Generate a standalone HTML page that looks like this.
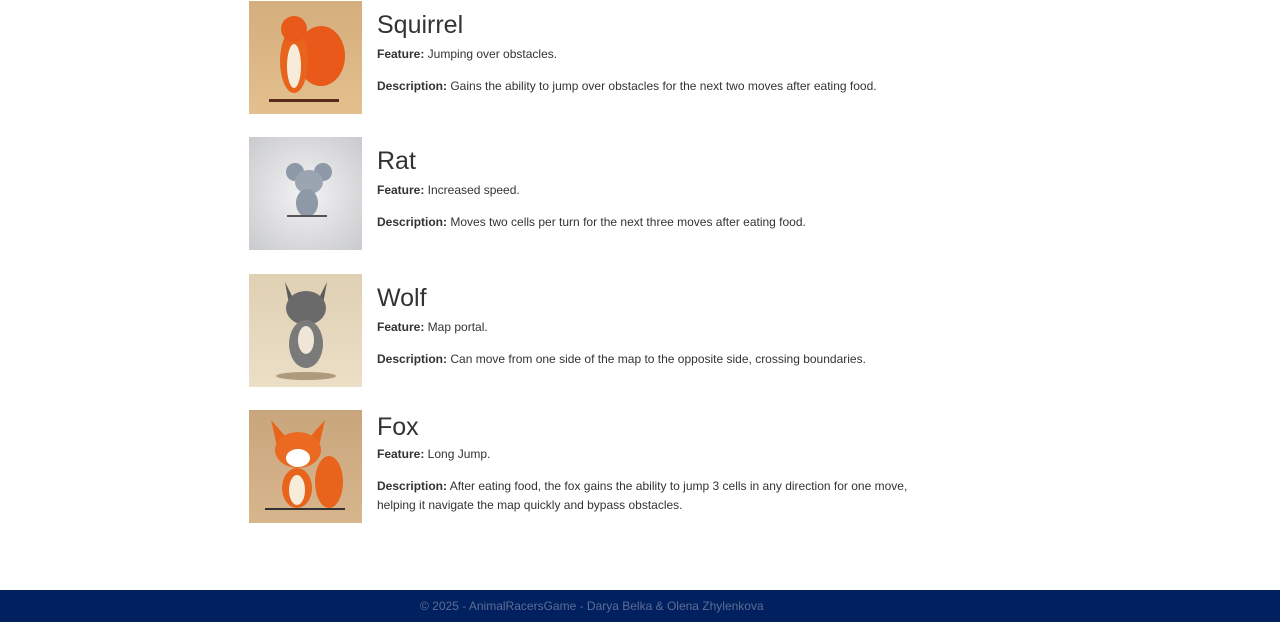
<!DOCTYPE html>
<html><head><meta charset="utf-8"><style>
body{margin:0;width:1280px;height:622px;position:relative;background:#fff;font-family:"Liberation Sans",sans-serif;color:#212529;overflow:hidden}
.row{position:absolute;left:249px;width:700px;height:114px}
.img{position:absolute;left:0;top:0;width:113px;height:113px;overflow:hidden}
.t{position:absolute;left:128px;top:10px;font-size:25px;color:#333;margin:0;font-weight:normal}
.f{position:absolute;left:128px;top:46px;font-size:12px;color:#333}
.d{position:absolute;left:128px;top:76px;font-size:12px;color:#333;line-height:19px;width:560px}
.fox .t{top:3px}.fox .f{top:37px}.fox .d{top:67px}
b{font-weight:bold}
footer{position:absolute;left:0;top:590px;width:1280px;height:32px;background:#002060;color:#5d6e94;font-size:12px;line-height:33px}
footer span{position:absolute;left:420px}
</style></head><body>
<div class="row" style="top:1px"><div class="img" style="background:linear-gradient(#d4ae7c,#e3c08e)">
<svg width="113" height="113"><ellipse cx="72" cy="55" rx="24" ry="30" fill="#e8591a"/><ellipse cx="45" cy="60" rx="14" ry="32" fill="#e8641c"/><ellipse cx="45" cy="65" rx="7" ry="22" fill="#f6ecd9"/><circle cx="45" cy="28" r="13" fill="#e8591a"/><rect x="20" y="98" width="70" height="3" fill="#5a2a1a"/></svg></div>
<h1 class="t">Squirrel</h1><div class="f"><b>Feature:</b> Jumping over obstacles.</div><div class="d"><b>Description:</b> Gains the ability to jump over obstacles for the next two moves after eating food.</div></div>

<div class="row" style="top:137px"><div class="img" style="background:radial-gradient(circle,#f3f3f4,#c9cacd)">
<svg width="113" height="113"><circle cx="46" cy="35" r="9" fill="#8d99a6"/><circle cx="74" cy="35" r="9" fill="#8d99a6"/><ellipse cx="60" cy="45" rx="14" ry="12" fill="#9aa5b1"/><ellipse cx="58" cy="66" rx="11" ry="14" fill="#8d99a6"/><rect x="38" y="78" width="40" height="2" fill="#555"/></svg></div>
<h1 class="t">Rat</h1><div class="f"><b>Feature:</b> Increased speed.</div><div class="d"><b>Description:</b> Moves two cells per turn for the next three moves after eating food.</div></div>

<div class="row" style="top:274px"><div class="img" style="background:linear-gradient(#dfd0b3,#ecdfc7)">
<svg width="113" height="113"><polygon points="36,8 46,28 40,30" fill="#5c5c5c"/><polygon points="78,8 68,28 74,30" fill="#5c5c5c"/><ellipse cx="57" cy="34" rx="20" ry="17" fill="#6a6a6a"/><ellipse cx="57" cy="70" rx="17" ry="24" fill="#7a7a7a"/><ellipse cx="57" cy="66" rx="8" ry="14" fill="#efe6d8"/><ellipse cx="57" cy="102" rx="30" ry="4" fill="#b09a7c"/></svg></div>
<h1 class="t">Wolf</h1><div class="f"><b>Feature:</b> Map portal.</div><div class="d"><b>Description:</b> Can move from one side of the map to the opposite side, crossing boundaries.</div></div>

<div class="row fox" style="top:410px"><div class="img" style="background:linear-gradient(#c9a57c,#d8b68d)">
<svg width="113" height="113"><ellipse cx="80" cy="72" rx="14" ry="26" fill="#e8641c"/><polygon points="22,10 38,28 28,36" fill="#e8641c"/><polygon points="76,10 60,28 70,36" fill="#e8641c"/><ellipse cx="49" cy="40" rx="23" ry="18" fill="#ea6a22"/><ellipse cx="49" cy="48" rx="12" ry="9" fill="#fff"/><ellipse cx="48" cy="78" rx="15" ry="20" fill="#e8641c"/><ellipse cx="48" cy="80" rx="8" ry="15" fill="#f6ecd9"/><rect x="16" y="98" width="80" height="2" fill="#333"/></svg></div>
<h1 class="t">Fox</h1><div class="f"><b>Feature:</b> Long Jump.</div><div class="d"><b>Description:</b> After eating food, the fox gains the ability to jump 3 cells in any direction for one move, helping it navigate the map quickly and bypass obstacles.</div></div>

<footer><span>© 2025 - AnimalRacersGame - Darya Belka &amp; Olena Zhylenkova</span></footer>
</body></html>
